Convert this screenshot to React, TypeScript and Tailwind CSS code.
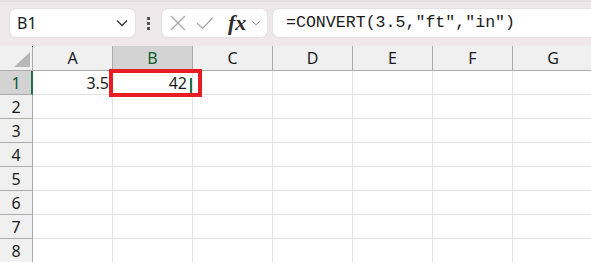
import React from 'react';

const cols = ['A', 'B', 'C', 'D', 'E', 'F', 'G'];
const rows = [1, 2, 3, 4, 5, 6, 7, 8];

const uiFont = { fontFamily: '"Noto Sans", "Open Sans", sans-serif' };

function Chevron({ className }: { className?: string }) {
  return (
    <svg viewBox="0 0 12 8" className={className} fill="none" stroke="currentColor" strokeWidth="1.3">
      <path d="M1 1.5 L6 6.5 L11 1.5" />
    </svg>
  );
}

function FormulaBar() {
  return (
    <div className="flex h-[46px] items-center bg-[#eee8eb] border-t-2 border-[#e2dde0] pb-[2px]" style={uiFont}>
      {/* name box */}
      <div className="ml-[10px] flex h-[28px] w-[125px] items-center justify-between rounded-[6px] bg-white pl-[7px] pr-[7px] shadow-[0_0_0_1px_#e4dfe2]">
        <span className="text-[16px] text-[#1b1b1b]">B1</span>
        <Chevron className="h-[8px] w-[12px] text-[#333]" />
      </div>

      {/* splitter dots */}
      <div className="ml-[10px] flex w-[7px] flex-col items-center gap-[2px]">
        <div className="h-[3px] w-[3px] bg-[#555]" />
        <div className="h-[3px] w-[3px] bg-[#555]" />
        <div className="h-[3px] w-[3px] bg-[#555]" />
      </div>

      {/* cancel / enter / fx */}
      <div className="ml-[10px] flex h-[28px] w-[105px] items-center rounded-[6px] bg-white pl-[8px] shadow-[0_0_0_1px_#e4dfe2]">
        <svg viewBox="0 0 16 16" className="h-[16px] w-[16px]" fill="none" stroke="#a6a6a6" strokeWidth="1.2">
          <path d="M1 1 L15 15 M15 1 L1 15" />
        </svg>
        <svg viewBox="0 0 18 14" className="ml-[10px] h-[14px] w-[18px]" fill="none" stroke="#a6a6a6" strokeWidth="1.2">
          <path d="M1 7 L6.5 12.5 L17 1.5" />
        </svg>
        <span
          className="ml-[14px] text-[22px] font-semibold italic leading-none text-[#2b2b2b]"
          style={{ fontFamily: '"Liberation Serif", "DejaVu Serif", serif' }}
        >
          fx
        </span>
        <Chevron className="ml-[5px] h-[6px] w-[10px] text-[#8a8a8a]" />
      </div>

      {/* formula input */}
      <div className="ml-[6px] flex h-[28px] flex-1 items-center rounded-l-[6px] bg-white pl-[13px] shadow-[0_0_0_1px_#e4dfe2]">
        <span className="text-[16.6px] text-[#1b1b1b]" style={{ fontFamily: '"Liberation Mono", "DejaVu Sans Mono", monospace' }}>
          =CONVERT(3.5,"ft","in")
        </span>
      </div>
    </div>
  );
}

function Sheet() {
  return (
    <div className="relative grid grid-cols-[33px_repeat(7,80px)] text-[16px] text-[#1b1b1b]" style={uiFont}>
      {/* corner */}
      <div className="relative h-[25px] border-r border-b border-[#ababab] bg-[#f0f0f0]">
        <svg viewBox="0 0 16 15" className="absolute bottom-[3px] right-[2px] h-[15px] w-[16px]">
          <polygon points="16,0 16,15 0,15" fill="#b8b8b8" />
        </svg>
        <div className="absolute top-0 right-[-1px] h-[1px] w-[1px] bg-black" />
      </div>
      {cols.map((c) => (
        <div
          key={c}
          className={`flex h-[25px] items-center justify-center border-r border-b border-[#ababab] ${
            c === 'B' ? 'bg-[#d3d3d3] text-[#0e5c2f]' : 'bg-[#f0f0f0]'
          } ${c === 'G' ? 'border-r-0' : ''}`}
        >
          {c}
        </div>
      ))}

      {rows.map((r) => (
        <React.Fragment key={r}>
          <div
            className={`flex h-[24px] items-center justify-center border-b ${
              r === 1
                ? 'bg-[#d3d3d3] text-[#0e5c2f] border-r-2 border-r-[#1e7145] border-b-[#ababab] pl-[1px]'
                : 'bg-[#f0f0f0] border-r border-[#ababab]'
            }`}
          >
            {r}
          </div>
          {cols.map((c) => (
            <div key={c} className="relative flex h-[24px] items-center justify-end border-r border-b border-[#e1e1e1] pr-[3px]">
              {r === 1 && c === 'A' && <span>3.5</span>}
              {r === 1 && c === 'B' && (
                <>
                  <span className="mr-[2px]">42</span>
                  <div className="absolute right-[0px] top-[7px] h-[15px] w-[2px] bg-[#1e7145]" />
                </>
              )}
            </div>
          ))}
        </React.Fragment>
      ))}

      {/* highlight box around B1 */}
      <div className="pointer-events-none absolute left-[109px] top-[23px] h-[28px] w-[93px] border-4 border-[#e81c23]" />
    </div>
  );
}

export default function App() {
  return (
    <div className="h-[262px] w-[591px] overflow-hidden bg-white">
      <FormulaBar />
      <Sheet />
    </div>
  );
}
